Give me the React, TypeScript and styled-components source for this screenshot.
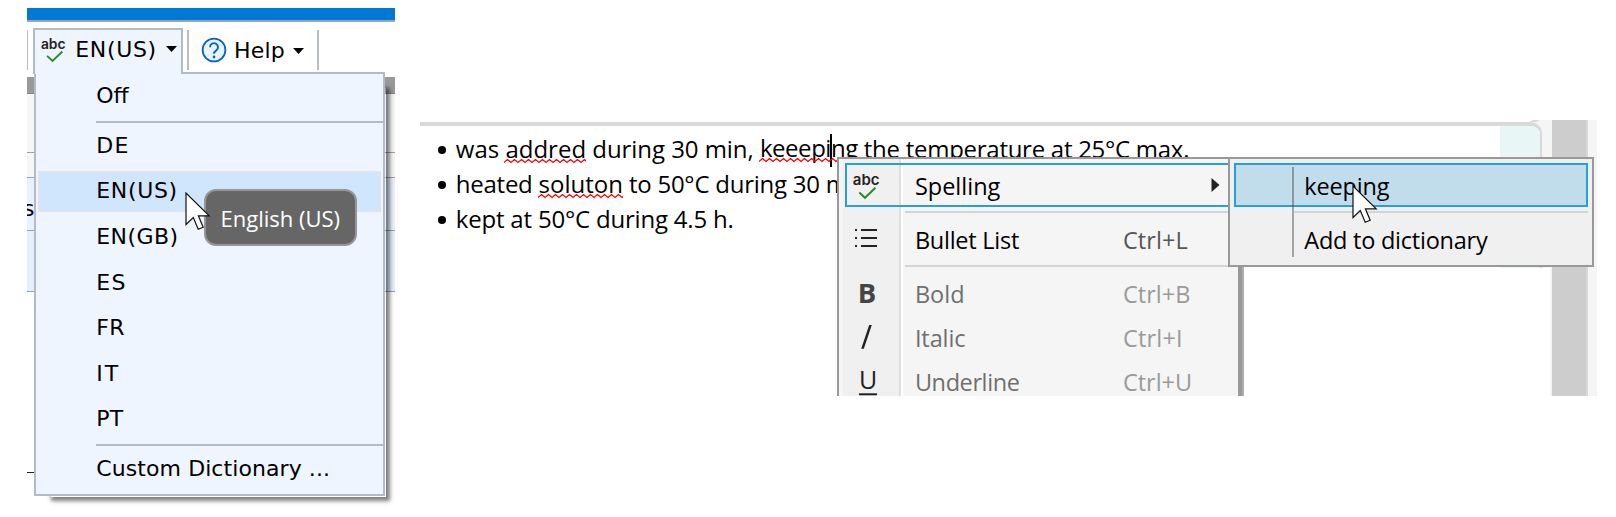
import React from 'react';
import styled, { createGlobalStyle } from 'styled-components';

const Global = createGlobalStyle`
  * { box-sizing: border-box; }
  body { margin: 0; background: #fff; }
`;

const ui = '"Open Sans", "Noto Sans", sans-serif';
const verdana = '"DejaVu Sans", sans-serif';

const Page = styled.main`
  display: flex;
  align-items: flex-start;
  gap: 25px;
  width: 1616px;
  height: 517px;
  padding-left: 27px;
  overflow: hidden;
`;

/* ---------- left window ---------- */

const LanguageWindow = styled.section`
  position: relative;
  width: 368px;
  height: 500px;
  margin-top: 8px;
  font: 22px ${verdana};
  color: #000;
`;

const TitleBar = styled.div`
  height: 14px;
  background: #0078d7;
  border-bottom: 2px solid #9aa5b0;
`;

const Toolbar = styled.div`
  display: flex;
  align-items: flex-start;
  height: 55px;
  padding-top: 6px;
`;

const ToolTab = styled.button`
  position: relative;
  z-index: 3;
  display: flex;
  align-items: flex-start;
  width: 150px;
  height: 46px;
  margin: 0 4px 0 6px;
  padding: 0;
  font: inherit;
  color: inherit;
  background: #eef5fe;
  border: 2px solid #b2bcc8;
  border-bottom: 0;
`;

const ToolButton = styled.button`
  display: flex;
  align-items: flex-start;
  width: 128px;
  height: 40px;
  margin: 2px 0 0;
  padding: 0 0 0 12px;
  font: inherit;
  color: inherit;
  background: none;
  border: 0;
`;

const Divider = styled.span`
  width: 2px;
  height: 40px;
  margin-top: 2px;
  background: #b7bdc6;
`;

const EdgeDivider = styled(Divider)`
  width: 1px;
  margin-right: -1px;
`;

const Label = styled.span<{ $track?: number }>`
  white-space: pre;
  letter-spacing: ${(p) => p.$track ?? 0}px;
`;

const TabLabel = styled(Label)`
  width: 91px;
  margin-left: 8.3px;
  line-height: 40px;
  text-align: left;
`;

const HelpLabel = styled(Label)`
  width: 59px;
  margin-left: 7px;
  line-height: 41px;
  text-align: left;
`;

const Caret = styled.svg<{ $top: number }>`
  flex: none;
  width: 11px;
  height: 6px;
  margin-top: ${(p) => p.$top}px;
`;

const SpellGlyph = styled.svg`
  flex: none;
  width: 28px;
  height: 28px;
  margin: 7px 0 0 4px;
  overflow: visible;
`;

const HelpGlyph = styled.svg`
  flex: none;
  width: 26px;
  height: 26px;
  margin-top: 7px;
`;

const Band = styled.div<{ $h: number; $bg: string; $line: string }>`
  height: ${(p) => p.$h}px;
  padding-top: 16px;
  overflow: hidden;
  background: ${(p) => p.$bg};
  border-bottom: 1px solid ${(p) => p.$line};
`;

const Fragment = styled.span`
  display: block;
  margin-left: -4px;
  line-height: 30px;
`;

const LowerRule = styled.div`
  width: 8px;
  height: 1px;
  margin-top: 180px;
  background: #222;
`;

const Dropdown = styled.ul`
  position: absolute;
  z-index: 2;
  left: 7px;
  top: 64px;
  width: 351px;
  height: 424px;
  margin: 0;
  padding: 0;
  list-style: none;
  background: #eef5fe;
  border: 2px solid #b2bcc8;
`;

const DropShadow = styled.div`
  position: absolute;
  z-index: 1;
  left: 24px;
  top: 80px;
  width: 335px;
  height: 409px;
  box-shadow: 2px 2px 4px 2px rgba(0, 0, 0, 0.5);
`;

const LangItem = styled.li<{ $h?: number; $active?: boolean }>`
  display: flex;
  align-items: center;
  height: ${(p) => p.$h ?? 45.6}px;
  padding: 0 2px 1px 60.3px;
  ${(p) =>
    p.$active &&
    `
    height: 41.6px;
    margin: 2px 2px 2px 2px;
    padding: 0 0 1px 56.3px;
    background: #cfe6fd;
    border: 2px solid #dfe4ec;
  `}
`;

const LangRule = styled.li<{ $gap: number }>`
  height: 2px;
  margin: ${(p) => p.$gap}px 0 0 60px;
  background: #b2bcc8;
`;

const Tooltip = styled.div`
  position: absolute;
  z-index: 4;
  left: 177px;
  top: 181px;
  width: 153px;
  height: 57px;
  padding-left: 14.5px;
  font: 22px/55px ${ui};
  color: #fff;
  background: #666;
  border: 2px solid #969696;
  border-radius: 12px;
`;

const Pointer = styled.svg<{ $x: number; $y: number }>`
  position: absolute;
  z-index: 6;
  left: ${(p) => p.$x}px;
  top: ${(p) => p.$y}px;
  width: 27px;
  height: 40px;
`;

/* ---------- right window ---------- */

const EditorWindow = styled.section`
  position: relative;
  display: flex;
  width: 1177px;
  height: 276px;
  margin-top: 120px;
  overflow: hidden;
  background: #f5f5f5;
  font: 24px ${ui};
  color: #000;
`;

const EditorColumn = styled.div`
  width: 1132px;
`;

const TopStrip = styled.div`
  width: 1118px;
  height: 2px;
  background: #fff;

  &::after {
    content: '';
    display: block;
    width: 7px;
    height: 2px;
    margin-left: auto;
    background: #d9d9d9;
    transform: skewX(-60deg);
  }
`;

const Card = styled.div`
  display: flex;
  justify-content: space-between;
  width: 1122px;
  height: 146px;
  overflow: hidden;
  background: #fff;
  border-top: 4px solid #d9d9d9;
  border-right: 2px solid #d9d9d9;
  border-top-right-radius: 12px;
`;

const CardMargin = styled.div`
  width: 40px;
  background: #e8f6f6;
`;

const PaperBelow = styled.div`
  width: 1130px;
  height: 128px;
  background: #fff;
`;

const ScrollTrack = styled.div`
  width: 36px;
  background: #cdcdcd;
  border-right: 2px solid #d9d9d9;
`;

const Lines = styled.ul`
  margin: 0;
  padding: 5px 0 0 18px;
  list-style: none;
`;

const Line = styled.li`
  display: flex;
  align-items: center;
  height: 35px;
  line-height: 35px;
  white-space: pre;
`;

const Dot = styled.span`
  width: 8px;
  height: 8px;
  margin: 3px 9.8px 0 0;
  border-radius: 50%;
  background: #000;
`;

const Misspelt = styled(Label)`
  position: relative;
`;

const Wave = styled.svg`
  position: absolute;
  left: -1px;
  top: 27px;
  width: calc(100% + 1px);
  height: 6px;
`;

const TextCaret = styled.i`
  display: inline-block;
  width: 2px;
  height: 33px;
  margin: 0 -1px;
  vertical-align: middle;
  background: #000;
`;

const ContextMenu = styled.div`
  position: absolute;
  z-index: 2;
  left: 417px;
  top: 37px;
  width: 405px;
  height: 300px;
  padding: 4px 0 0 4px;
  background: linear-gradient(90deg, #f5f5f5 4px, #f0f0f0 4px 60px, #dedede 60px 62px, #fff 62px 64px, #f5f5f5 64px);
  border: 2px solid #999;
  border-right: 4px solid #999;
`;

const MenuEdge = styled.div`
  position: absolute;
  left: 822px;
  top: 147px;
  width: 2px;
  height: 129px;
  background: #adadad;
`;

const MenuRow = styled.div<{ $active?: boolean }>`
  display: flex;
  align-items: center;
  height: 44px;
  margin-left: 2px;
  font-size: 23.5px;
  ${(p) => p.$active && 'box-shadow: inset 0 0 0 2px #26a0da;'}
`;

const MenuIcon = styled.svg`
  width: 46px;
  height: 44px;
  overflow: visible;
`;

const MenuText = styled(Label)<{ $dim?: boolean }>`
  width: 208px;
  margin-left: 23.9px;
  padding-top: 2px;
  line-height: 44px;
  color: ${(p) => (p.$dim ? '#6f6f6f' : '#000')};
`;

const Shortcut = styled(Label)<{ $dim?: boolean }>`
  padding-top: 2px;
  line-height: 44px;
  color: ${(p) => (p.$dim ? '#9a9a9a' : '#555')};
`;

const SubArrow = styled.svg`
  width: 9px;
  height: 14px;
  margin: -1px 0 0 88.3px;
`;

const MenuRule = styled.div<{ $left: number }>`
  height: 2px;
  margin: 4px 0 4px ${(p) => p.$left}px;
  background: #d4d4d4;
`;

const SubMenu = styled.div`
  position: absolute;
  z-index: 3;
  left: 808px;
  top: 37px;
  width: 366px;
  height: 110px;
  padding: 4px;
  background: #f0f0f0;
  border: 2px solid #999;
`;

const SubRow = styled.div<{ $active?: boolean }>`
  height: 44px;
  padding-left: 70.3px;
  font-size: 23.5px;
  line-height: 46px;
  ${(p) =>
    p.$active &&
    `
    background: #c1dceb;
    box-shadow: inset 0 0 0 2px #26a0da;
  `}
`;

const SubGutter = styled.div`
  position: absolute;
  left: 62px;
  top: 8px;
  width: 2px;
  height: 90px;
  background: rgba(70, 70, 70, 0.45);
`;

const AbcCheck = ({ size }: { size: number }) => (
  <>
    <text x="0" y="11" fontFamily="Inter, sans-serif" fontSize={size} fontWeight="600" fill="#222">
      abc
    </text>
    <path d="M6.5 18.2 L12.2 23.6 L22.6 13.6" fill="none" stroke="#2c8a2c" strokeWidth="2" />
  </>
);

const DownCaret = ({ top }: { top: number }) => (
  <Caret $top={top} viewBox="0 0 11 6">
    <path d="M0 0H11L5.5 6Z" fill="#000" />
  </Caret>
);

const MousePointer = ({ x, y }: { x: number; y: number }) => (
  <Pointer $x={x} $y={y} viewBox="0 0 27 40">
    <path
      d="M1 1V32.5L8.3 25.6L13.2 37.3L18.2 35.2L13.4 23.8H24.2Z"
      fill="#fff"
      stroke="#111"
      strokeWidth="1.2"
    />
  </Pointer>
);

const Misspelled = ({ children, track }: { children: React.ReactNode; track?: number }) => {
  let d = 'M0 4.5';
  for (let i = 0; i < 30; i++) d += `L${i * 7 + 3.5} 1.5L${i * 7 + 7} 4.5`;
  return (
    <Misspelt $track={track}>
      {children}
      <Wave>
        <path d={d} fill="none" stroke="#f00" strokeWidth="1.3" />
      </Wave>
    </Misspelt>
  );
};

const languages: { name: string; track: number }[] = [
  { name: 'DE', track: 1.2 },
  { name: 'EN(US)', track: 0.65 },
  { name: 'EN(GB)', track: 0.4 },
  { name: 'ES', track: 1.2 },
  { name: 'FR', track: 0.3 },
  { name: 'IT', track: 2 },
  { name: 'PT', track: 0.2 },
];

export default function App() {
  return (
    <Page>
      <Global />
      <LanguageWindow>
        <TitleBar />
        <Toolbar>
          <EdgeDivider />
          <ToolTab>
            <SpellGlyph viewBox="0 0 28 28">
              <g transform="translate(1.9 1.6) scale(0.95)">
                <AbcCheck size={14.6} />
              </g>
            </SpellGlyph>
            <TabLabel $track={0.65}>EN(US)</TabLabel>
            <DownCaret top={16} />
          </ToolTab>
          <Divider />
          <ToolButton>
            <HelpGlyph viewBox="0 0 26 26">
              <circle cx="13" cy="13" r="11.4" fill="#e9f3fc" stroke="#0c62c4" strokeWidth="1.8" />
              <path
                d="M9 10.2a4 4 0 1 1 6.3 3.2c-1.5 1.1-2.3 1.8-2.3 3.4"
                fill="none"
                stroke="#0c62c4"
                strokeWidth="1.9"
              />
              <circle cx="13" cy="20" r="1.4" fill="#0c62c4" />
            </HelpGlyph>
            <HelpLabel $track={0.2}>Help</HelpLabel>
            <DownCaret top={18} />
          </ToolButton>
          <Divider />
        </Toolbar>
        <Band $h={17} $bg="#999" $line="#858585" />
        <Band $h={59} $bg="#f6f6f6" $line="#a0a0a0" />
        <Band $h={25} $bg="#f6f6f6" $line="#a0a0a0" />
        <Band $h={53} $bg="#e9f1fd" $line="#989fa8">
          <Fragment>s</Fragment>
        </Band>
        <Band $h={61} $bg="#e6effd" $line="#989fa8" />
        <LowerRule />

        <DropShadow />
        <Dropdown>
          <LangItem $h={44}>Off</LangItem>
          <LangRule $gap={3} />
          {languages.map((l) => (
            <LangItem key={l.name} $active={l.name === 'EN(US)'}>
              <Label $track={l.track}>{l.name}</Label>
            </LangItem>
          ))}
          <LangRule $gap={2} />
          <LangItem $h={45.5}>
            <Label $track={0.08}>Custom Dictionary ...</Label>
          </LangItem>
        </Dropdown>
        <Tooltip>English (US)</Tooltip>
        <MousePointer x={158} y={184} />
      </LanguageWindow>

      <EditorWindow>
        <EditorColumn>
          <TopStrip />
          <Card>
            <Lines>
              <Line>
                <Dot />
                <Label>was </Label>
                <Misspelled>addred</Misspelled>
                <Label $track={-0.05}> during 30 min, </Label>
                <Misspelled track={-0.45}>
                  keeepi
                  <TextCaret />
                  ng
                </Misspelled>
                <Label $track={-0.27}> the temperature at 25°C max.</Label>
              </Line>
              <Line>
                <Dot />
                <Label $track={-0.25}>heated </Label>
                <Misspelled>soluton</Misspelled>
                <Label $track={-0.24}> to 50°C during 30 m</Label>
              </Line>
              <Line>
                <Dot />
                <Label $track={-0.2}>kept at 50°C during 4.5 h.</Label>
              </Line>
            </Lines>
            <CardMargin />
          </Card>
          <PaperBelow />
        </EditorColumn>
        <ScrollTrack />

        <ContextMenu>
          <MenuRow $active>
            <MenuIcon viewBox="0 0 46 44">
              <g transform="translate(7.8 11.2)">
                <AbcCheck size={15} />
              </g>
            </MenuIcon>
            <MenuText>Spelling</MenuText>
            <SubArrow viewBox="0 0 9 14">
              <path d="M0.5 0L8.5 7L0.5 14Z" fill="#222" />
            </SubArrow>
          </MenuRow>
          <MenuRule $left={62} />
          <MenuRow>
            <MenuIcon viewBox="0 0 46 44">
              <path
                d="M10 13h2M16 13h16M10 21h2M16 21h16M10 29h2M16 29h16"
                stroke="#222"
                strokeWidth="2"
              />
            </MenuIcon>
            <MenuText $track={-0.25}>Bullet List</MenuText>
            <Shortcut $track={0.1}>Ctrl+L</Shortcut>
          </MenuRow>
          <MenuRule $left={62} />
          <MenuRow>
            <MenuIcon viewBox="0 0 46 44">
              <text x="12.7" y="31.7" fontSize="27.5" fontWeight="700" fill="#444">B</text>
            </MenuIcon>
            <MenuText $dim>Bold</MenuText>
            <Shortcut $dim $track={0.05}>Ctrl+B</Shortcut>
          </MenuRow>
          <MenuRow>
            <MenuIcon viewBox="0 0 46 44">
              <path d="M16.2 33.8h2.6L26.8 10h-2.6Z" fill="#222" />
            </MenuIcon>
            <MenuText $dim $track={-0.1}>Italic</MenuText>
            <Shortcut $dim $track={0.2}>Ctrl+I</Shortcut>
          </MenuRow>
          <MenuRow>
            <MenuIcon viewBox="0 0 46 44">
              <text x="14" y="30" fontSize="25" fill="#222">U</text>
              <path d="M14 35.3h18" stroke="#222" strokeWidth="2" />
            </MenuIcon>
            <MenuText $dim $track={-0.4}>Underline</MenuText>
            <Shortcut $dim $track={0}>Ctrl+U</Shortcut>
          </MenuRow>
        </ContextMenu>
        <MenuEdge />

        <SubMenu>
          <SubRow $active>
            <Label $track={-0.15}>keeping</Label>
          </SubRow>
          <MenuRule $left={60} />
          <SubRow>
            <Label $track={-0.24}>Add to dictionary</Label>
          </SubRow>
          <SubGutter />
        </SubMenu>
        <MousePointer x={931.5} y={65} />
      </EditorWindow>
    </Page>
  );
}
